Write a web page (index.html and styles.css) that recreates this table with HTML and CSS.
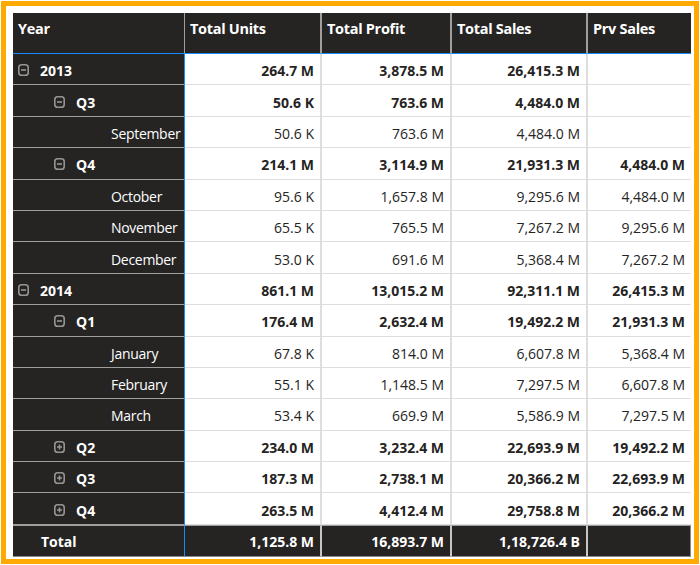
FILE: index.html
```html
<!DOCTYPE html>
<html>
<head>
<meta charset="utf-8">
<link rel="stylesheet" href="styles.css">
</head>
<body>
<div class="frame">
  <div class="matrix">
    <div class="hd c-year">Year</div>
    <div class="hd">Total Units</div>
    <div class="hd">Total Profit</div>
    <div class="hd">Total Sales</div>
    <div class="hd last">Prv Sales</div>

    <div class="rh l1 b"><svg class="ic" viewBox="0 0 11 12"><rect x="0.8" y="0.8" width="9.4" height="10.4" rx="2.8"/><path d="M3 6h5"/></svg>2013</div>
    <div class="v b">264.7 M</div><div class="v b">3,878.5 M</div><div class="v b">26,415.3 M</div><div class="v b last"></div>

    <div class="rh l2 b"><svg class="ic" viewBox="0 0 11 12"><rect x="0.8" y="0.8" width="9.4" height="10.4" rx="2.8"/><path d="M3 6h5"/></svg>Q3</div>
    <div class="v b">50.6 K</div><div class="v b">763.6 M</div><div class="v b">4,484.0 M</div><div class="v b last"></div>

    <div class="rh l3">September</div>
    <div class="v">50.6 K</div><div class="v">763.6 M</div><div class="v">4,484.0 M</div><div class="v last"></div>

    <div class="rh l2 b"><svg class="ic" viewBox="0 0 11 12"><rect x="0.8" y="0.8" width="9.4" height="10.4" rx="2.8"/><path d="M3 6h5"/></svg>Q4</div>
    <div class="v b">214.1 M</div><div class="v b">3,114.9 M</div><div class="v b">21,931.3 M</div><div class="v b last">4,484.0 M</div>

    <div class="rh l3">October</div>
    <div class="v">95.6 K</div><div class="v">1,657.8 M</div><div class="v">9,295.6 M</div><div class="v last">4,484.0 M</div>

    <div class="rh l3">November</div>
    <div class="v">65.5 K</div><div class="v">765.5 M</div><div class="v">7,267.2 M</div><div class="v last">9,295.6 M</div>

    <div class="rh l3">December</div>
    <div class="v">53.0 K</div><div class="v">691.6 M</div><div class="v">5,368.4 M</div><div class="v last">7,267.2 M</div>

    <div class="rh l1 b"><svg class="ic" viewBox="0 0 11 12"><rect x="0.8" y="0.8" width="9.4" height="10.4" rx="2.8"/><path d="M3 6h5"/></svg>2014</div>
    <div class="v b">861.1 M</div><div class="v b">13,015.2 M</div><div class="v b">92,311.1 M</div><div class="v b last">26,415.3 M</div>

    <div class="rh l2 b"><svg class="ic" viewBox="0 0 11 12"><rect x="0.8" y="0.8" width="9.4" height="10.4" rx="2.8"/><path d="M3 6h5"/></svg>Q1</div>
    <div class="v b">176.4 M</div><div class="v b">2,632.4 M</div><div class="v b">19,492.2 M</div><div class="v b last">21,931.3 M</div>

    <div class="rh l3">January</div>
    <div class="v">67.8 K</div><div class="v">814.0 M</div><div class="v">6,607.8 M</div><div class="v last">5,368.4 M</div>

    <div class="rh l3">February</div>
    <div class="v">55.1 K</div><div class="v">1,148.5 M</div><div class="v">7,297.5 M</div><div class="v last">6,607.8 M</div>

    <div class="rh l3">March</div>
    <div class="v">53.4 K</div><div class="v">669.9 M</div><div class="v">5,586.9 M</div><div class="v last">7,297.5 M</div>

    <div class="rh l2 b"><svg class="ic" viewBox="0 0 11 12"><rect x="0.8" y="0.8" width="9.4" height="10.4" rx="2.8"/><path d="M3 6h5M5.5 3.5v5"/></svg>Q2</div>
    <div class="v b">234.0 M</div><div class="v b">3,232.4 M</div><div class="v b">22,693.9 M</div><div class="v b last">19,492.2 M</div>

    <div class="rh l2 b"><svg class="ic" viewBox="0 0 11 12"><rect x="0.8" y="0.8" width="9.4" height="10.4" rx="2.8"/><path d="M3 6h5M5.5 3.5v5"/></svg>Q3</div>
    <div class="v b">187.3 M</div><div class="v b">2,738.1 M</div><div class="v b">20,366.2 M</div><div class="v b last">22,693.9 M</div>

    <div class="rh l2 b"><svg class="ic" viewBox="0 0 11 12"><rect x="0.8" y="0.8" width="9.4" height="10.4" rx="2.8"/><path d="M3 6h5M5.5 3.5v5"/></svg>Q4</div>
    <div class="v b">263.5 M</div><div class="v b">4,412.4 M</div><div class="v b">29,758.8 M</div><div class="v b last">20,366.2 M</div>

    <div class="tot tot-label">Total</div>
    <div class="tot">1,125.8 M</div>
    <div class="tot">16,893.7 M</div>
    <div class="tot">1,18,726.4 B</div>
    <div class="tot last"></div>
  </div>
</div>
</body>
</html>
```

FILE: styles.css
```css
html, body {
  margin: 0;
  padding: 0;
  background: #ffffff;
}

body {
  font-family: "Open Sans", "Noto Sans", "Liberation Sans", sans-serif;
  font-size: 14px;
}

.frame {
  box-sizing: border-box;
  margin: 1px 0 0 1px;
  width: 698px;
  height: 563px;
  border: 5px solid #ffaa00;
  padding: 7px 0 0 7px;
  overflow: hidden;
  background: #ffffff;
}

.matrix {
  display: grid;
  grid-template-columns: 172px 137px 130px 136px 103px;
  grid-template-rows: 41px repeat(15, 31.4px) 32px;
  width: 678px;
}

.matrix > div {
  box-sizing: border-box;
  display: flex;
  align-items: center;
  white-space: nowrap;
}

.hd {
  background: #252423;
  color: #ffffff;
  font-weight: 700;
  font-size: 14.5px;
  letter-spacing: -0.3px;
  padding: 0 0 9px 5px;
  border-right: 2px solid #a19f9d;
  border-bottom: 1px solid #118dff;
}

.hd.c-year {
  border-right: 1px solid #a19f9d;
}

.rh {
  background: #252423;
  color: #ffffff;
  border-right: 1px solid #118dff;
  border-bottom: 1px solid #a19f9d;
  padding-top: 3px;
}

.rh.b { font-weight: 700; }

.l1 { padding-left: 5px; }
.l2 { padding-left: 41px; }
.l3 { padding-left: 98px; letter-spacing: -0.3px; }

.ic {
  width: 11px;
  height: 12px;
  margin-right: 11px;
  margin-top: -1px;
  flex: none;
  fill: none;
  stroke: #979593;
  stroke-width: 1.6;
}

.v {
  justify-content: flex-end;
  padding: 3px 6px 0 0;
  color: #252423;
  background: #ffffff;
  border-right: 2px solid #dedede;
  border-bottom: 1px solid #dedede;
}

.v.b { font-weight: 700; }

.last { border-right: none; }

.tot {
  justify-content: flex-end;
  padding: 1px 6px 0 0;
  background: #252423;
  color: #ffffff;
  font-weight: 700;
  border-top: 1px solid #a19f9d;
  border-right: 2px solid #c8c6c4;
  border-bottom: 1px solid #8a8886;
}

.tot.tot-label {
  justify-content: flex-start;
  padding-left: 28px;
  border-right: 1px solid #118dff;
}

.tot.last {
  border-right: 1px solid #8a8886;
}
```
